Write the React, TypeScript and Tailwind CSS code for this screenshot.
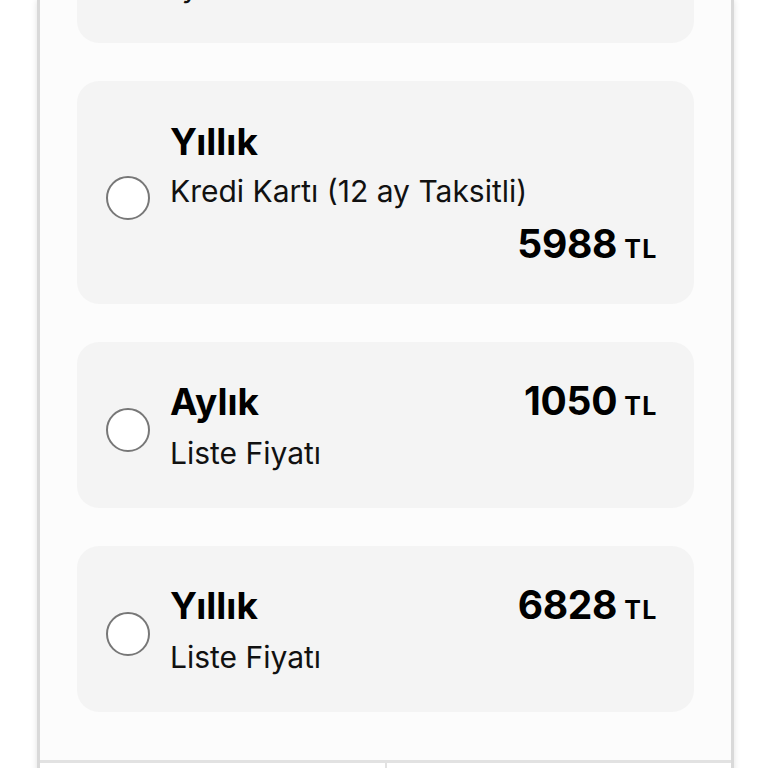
import React from "react";

type Plan = {
  title: string;
  subtitle: string;
  price: string;
  stacked?: boolean;
};

const plans: Plan[] = [
  { title: "Yıllık", subtitle: "Kredi Kartı (12 ay Taksitli)", price: "5988", stacked: true },
  { title: "Aylık", subtitle: "Liste Fiyatı", price: "1050" },
  { title: "Yıllık", subtitle: "Liste Fiyatı", price: "6828" },
];

const Radio = () => (
  <div className="h-[44px] w-[44px] shrink-0 rounded-full border-[2.5px] border-[#777777] bg-white" />
);

const Price = ({ value }: { value: string }) => (
  <div className="flex items-baseline gap-[7px] whitespace-nowrap text-black">
    <span className="text-[39px] font-bold leading-[48px] tracking-[-0.3px]">{value}</span>
    <span className="text-[25px] font-bold leading-[48px] tracking-[1.5px]">TL</span>
  </div>
);

const PlanCard = ({ plan }: { plan: Plan }) => (
  <div className="flex items-center gap-[20px] rounded-[22px] bg-[#f4f4f4] pl-[29px] pr-[36px]">
    <div className="mt-[10px]">
      <Radio />
    </div>
    {plan.stacked ? (
      <div className="flex flex-1 flex-col pt-[39px] pb-[31px]">
        <div className="text-[37px] font-bold leading-[44px] text-black">{plan.title}</div>
        <div className="mt-[7px] text-[30px] leading-[40px] text-[#111111]">{plan.subtitle}</div>
        <div className="flex justify-end pt-[9px]">
          <Price value={plan.price} />
        </div>
      </div>
    ) : (
      <div className="flex flex-1 flex-col pt-[35px] pb-[35px]">
        <div className="flex items-baseline justify-between">
          <div className="text-[37px] font-bold leading-[48px] text-black">{plan.title}</div>
          <Price value={plan.price} />
        </div>
        <div className="mt-[3px] text-[30px] leading-[40px] text-[#111111]">{plan.subtitle}</div>
      </div>
    )}
  </div>
);

export default function App() {
  return (
    <div
      className="h-[768px] overflow-hidden bg-white"
      style={{ fontFamily: "Inter, 'Liberation Sans', sans-serif" }}
    >
      <div className="mx-[37px] flex h-[820px] w-[697px] flex-col border-x-[3px] border-[#d9d9d9] bg-[#fcfcfc] shadow-[0_0_6px_rgba(0,0,0,0.12)]">
        <div className="flex flex-col gap-[38px] px-[37px]">
          <div className="-mt-[122px] flex h-[165px] items-end rounded-[22px] bg-[#f4f4f4] pl-[86px]">
            <div className="mb-[37px] text-[30px] leading-[40px] text-[#111111]">Aylık ödeme</div>
          </div>
          {plans.map((p, i) => (
            <PlanCard key={i} plan={p} />
          ))}
        </div>
        <div className="mt-[48px] flex h-[60px] border-t-[3px] border-[#e2e2e2] bg-white">
          <div className="flex-1 border-r-[2px] border-[#e2e2e2]" />
          <div className="flex-1" />
        </div>
      </div>
    </div>
  );
}
